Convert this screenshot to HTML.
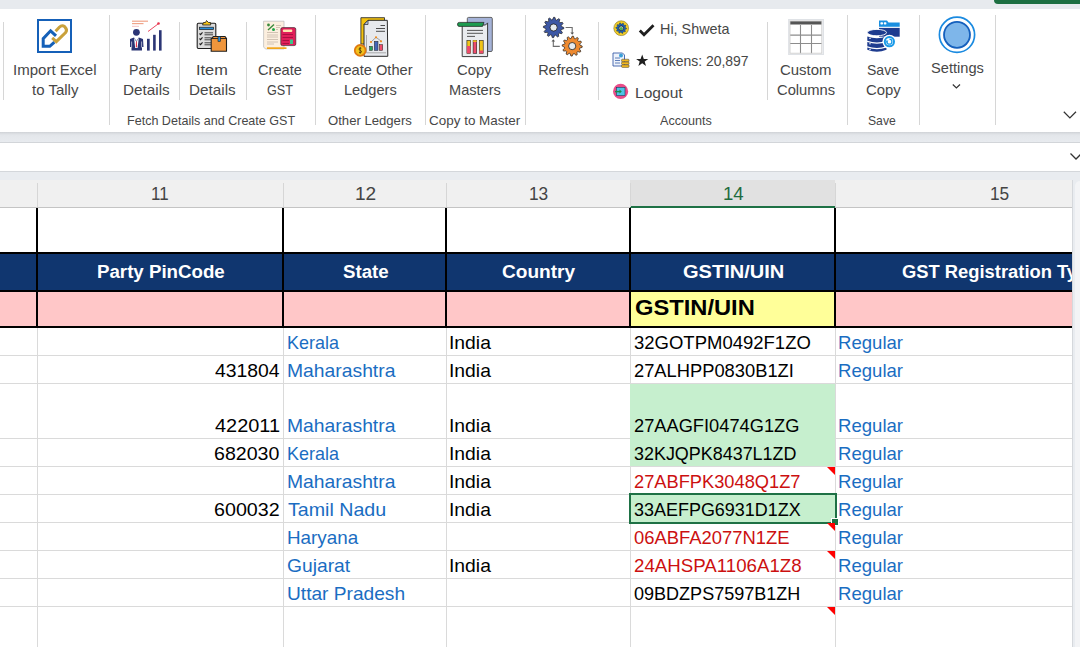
<!DOCTYPE html>
<html><head><meta charset="utf-8"><style>
html,body{margin:0;padding:0;}
body{width:1080px;height:647px;overflow:hidden;position:relative;background:#e9ecf0;font-family:"Liberation Sans",sans-serif;}
.r{position:absolute;}
.t{position:absolute;white-space:nowrap;}
</style></head><body>
<div class="r" style="left:0px;top:0px;width:1080px;height:9px;background:#e7eaee;"></div>
<div class="r" style="left:994px;top:0px;width:86px;height:4px;background:#1d6f42;border-bottom-left-radius:4px;"></div>
<div class="r" style="left:0px;top:9px;width:1080px;height:123px;background:#ffffff;"></div>
<div class="r" style="left:0px;top:132px;width:1080px;height:10px;background:linear-gradient(#cfd2d6 0px,#dadde1 1.5px,#e3e6ea 3px,#e8ebef 10px);"></div>
<div class="r" style="left:0px;top:142px;width:1080px;height:1px;background:#d2d5d9;"></div>
<div class="r" style="left:0px;top:143px;width:1080px;height:28px;background:#ffffff;"></div>
<div class="r" style="left:0px;top:171px;width:1080px;height:1px;background:#d4d7db;"></div>
<div class="r" style="left:0px;top:172px;width:1080px;height:8px;background:#e9ecf0;"></div>
<div class="r" style="left:3px;top:22px;width:1px;height:78px;background:#d6d6d6;"></div>
<div class="r" style="left:179px;top:22px;width:1px;height:78px;background:#d6d6d6;"></div>
<div class="r" style="left:246px;top:22px;width:1px;height:78px;background:#d6d6d6;"></div>
<div class="r" style="left:598px;top:22px;width:1px;height:78px;background:#d6d6d6;"></div>
<div class="r" style="left:767px;top:22px;width:1px;height:78px;background:#d6d6d6;"></div>
<div class="r" style="left:109px;top:15px;width:1px;height:110px;background:#d6d6d6;"></div>
<div class="r" style="left:315px;top:15px;width:1px;height:110px;background:#d6d6d6;"></div>
<div class="r" style="left:425px;top:15px;width:1px;height:110px;background:#d6d6d6;"></div>
<div class="r" style="left:525px;top:15px;width:1px;height:110px;background:#d6d6d6;"></div>
<div class="r" style="left:847px;top:15px;width:1px;height:110px;background:#d6d6d6;"></div>
<div class="r" style="left:919px;top:15px;width:1px;height:110px;background:#d6d6d6;"></div>
<div class="r" style="left:995px;top:15px;width:1px;height:110px;background:#d6d6d6;"></div>
<div class="t" style="left:13.45px;top:62.73px;font-size:14.5px;line-height:14.5px;color:#474747;font-weight:400;transform:scaleX(1.0370);transform-origin:0 50%;">Import Excel</div>
<div class="t" style="left:32.27px;top:82.73px;font-size:14.5px;line-height:14.5px;color:#474747;font-weight:400;transform:scaleX(1.0356);transform-origin:0 50%;">to Tally</div>
<div class="t" style="left:128.87px;top:62.73px;font-size:14.5px;line-height:14.5px;color:#474747;font-weight:400;transform:scaleX(0.9726);transform-origin:0 50%;">Party</div>
<div class="t" style="left:122.58px;top:82.73px;font-size:14.5px;line-height:14.5px;color:#474747;font-weight:400;transform:scaleX(1.0532);transform-origin:0 50%;">Details</div>
<div class="t" style="left:196.43px;top:62.73px;font-size:14.5px;line-height:14.5px;color:#474747;font-weight:400;transform:scaleX(1.1250);transform-origin:0 50%;">Item</div>
<div class="t" style="left:189.38px;top:82.73px;font-size:14.5px;line-height:14.5px;color:#474747;font-weight:400;transform:scaleX(1.0532);transform-origin:0 50%;">Details</div>
<div class="t" style="left:257.67px;top:62.73px;font-size:14.5px;line-height:14.5px;color:#474747;font-weight:400;transform:scaleX(1.0066);transform-origin:0 50%;">Create</div>
<div class="t" style="left:266.77px;top:82.73px;font-size:14.5px;line-height:14.5px;color:#474747;font-weight:400;transform:scaleX(0.8721);transform-origin:0 50%;">GST</div>
<div class="t" style="left:328.47px;top:62.73px;font-size:14.5px;line-height:14.5px;color:#474747;font-weight:400;transform:scaleX(1.0085);transform-origin:0 50%;">Create Other</div>
<div class="t" style="left:344.33px;top:82.73px;font-size:14.5px;line-height:14.5px;color:#474747;font-weight:400;transform:scaleX(1.0069);transform-origin:0 50%;">Ledgers</div>
<div class="t" style="left:457.46px;top:62.73px;font-size:14.5px;line-height:14.5px;color:#474747;font-weight:400;transform:scaleX(1.0201);transform-origin:0 50%;">Copy</div>
<div class="t" style="left:449.13px;top:82.73px;font-size:14.5px;line-height:14.5px;color:#474747;font-weight:400;transform:scaleX(1.0044);transform-origin:0 50%;">Masters</div>
<div class="t" style="left:538.14px;top:62.73px;font-size:14.5px;line-height:14.5px;color:#474747;font-weight:400;">Refresh</div>
<div class="t" style="left:779.95px;top:62.73px;font-size:14.5px;line-height:14.5px;color:#474747;font-weight:400;transform:scaleX(1.0314);transform-origin:0 50%;">Custom</div>
<div class="t" style="left:777.06px;top:82.73px;font-size:14.5px;line-height:14.5px;color:#474747;font-weight:400;transform:scaleX(1.0166);transform-origin:0 50%;">Columns</div>
<div class="t" style="left:867.37px;top:62.73px;font-size:14.5px;line-height:14.5px;color:#474747;font-weight:400;transform:scaleX(0.9668);transform-origin:0 50%;">Save</div>
<div class="t" style="left:865.96px;top:82.73px;font-size:14.5px;line-height:14.5px;color:#474747;font-weight:400;transform:scaleX(1.0262);transform-origin:0 50%;">Copy</div>
<div class="t" style="left:930.84px;top:60.73px;font-size:14.5px;line-height:14.5px;color:#474747;font-weight:400;transform:scaleX(1.0086);transform-origin:0 50%;">Settings</div>
<div class="t" style="left:127.40px;top:115.25px;font-size:12.7px;line-height:12.7px;color:#474747;font-weight:400;transform:scaleX(0.9891);transform-origin:0 50%;">Fetch Details and Create GST</div>
<div class="t" style="left:328.21px;top:115.25px;font-size:12.7px;line-height:12.7px;color:#474747;font-weight:400;transform:scaleX(1.0337);transform-origin:0 50%;">Other Ledgers</div>
<div class="t" style="left:428.73px;top:115.25px;font-size:12.7px;line-height:12.7px;color:#474747;font-weight:400;transform:scaleX(1.0608);transform-origin:0 50%;">Copy to Master</div>
<div class="t" style="left:660.00px;top:115.25px;font-size:12.7px;line-height:12.7px;color:#474747;font-weight:400;transform:scaleX(0.9920);transform-origin:0 50%;">Accounts</div>
<div class="t" style="left:868.45px;top:115.25px;font-size:12.7px;line-height:12.7px;color:#474747;font-weight:400;transform:scaleX(0.9600);transform-origin:0 50%;">Save</div>
<div class="t" style="left:660.45px;top:22.18px;font-size:14.2px;line-height:14.2px;color:#474747;font-weight:400;transform:scaleX(1.0130);transform-origin:0 50%;">Hi, Shweta</div>
<div class="t" style="left:653.62px;top:53.78px;font-size:14.2px;line-height:14.2px;color:#474747;font-weight:400;transform:scaleX(0.9834);transform-origin:0 50%;">Tokens: 20,897</div>
<div class="t" style="left:635.35px;top:85.98px;font-size:14.2px;line-height:14.2px;color:#474747;font-weight:400;transform:scaleX(1.0978);transform-origin:0 50%;">Logout</div>
<svg class="r" style="left:37px;top:19px" width="36" height="34" viewBox="0 0 36 34"><rect x="1" y="1" width="33" height="32" fill="none" stroke="#1560b8" stroke-width="2"/>
<path d="M19 16.8 L13.6 11.8 L6.2 19.6 L6.2 27.3 L12.8 27.3 L17.4 23.2" fill="none" stroke="#1560b8" stroke-width="3" stroke-linejoin="miter"/>
<path d="M15.2 18.8 L19.3 22.6 L28.6 13.6 Q30.8 10.6 27.8 7.8 Q25 5.6 22.3 8.3 L18.6 12.2" fill="none" stroke="#c9a13b" stroke-width="3"/></svg>
<svg class="r" style="left:125px;top:15px" width="42" height="40" viewBox="0 0 42 40"><rect x="7" y="5.6" width="16" height="1.2" fill="#f0a58a"/><rect x="7" y="8" width="11.5" height="1.2" fill="#f0a58a"/><rect x="7" y="10.8" width="7" height="1" fill="#f6c0c0"/>
<path d="M23 16.5 L33 9" stroke="#e8344e" stroke-width="0.9"/><circle cx="33.5" cy="8.5" r="1.3" fill="#e8344e"/>
<circle cx="11.4" cy="17.3" r="3.4" fill="#2b3575"/>
<path d="M5 24 L9 22.5 L11.4 26 L13.8 22.5 L18 24 L18.5 32 L17 32 L17 35.6 L6.5 35.6 L6.5 32 L5 32 Z" fill="#2b3575"/>
<path d="M6.6 26.5 V32.5 M16.6 26.5 V32.5" stroke="#ffffff" stroke-width="0.6"/>
<path d="M9 22.8 L11.4 27 L13.8 22.8 L12.6 33 L10.2 33 Z" fill="#ffffff"/><path d="M11 26.5 L11.9 26.5 L12.1 31.5 L11.4 32.8 L10.8 31.5 Z" fill="#e8344e"/>
<rect x="22" y="23.8" width="2.7" height="11.8" fill="#2b3575"/><rect x="28.1" y="19.8" width="2.6" height="15.8" fill="#2b3575"/><rect x="34" y="15.2" width="2.6" height="20.4" fill="#2b3575"/></svg>
<svg class="r" style="left:192px;top:15px" width="40" height="40" viewBox="0 0 40 40"><rect x="5.2" y="8.3" width="18.6" height="25.2" rx="1.2" fill="#dcdcdc" stroke="#1f1f1f" stroke-width="1.1"/>
<path d="M10.5 10 L11.5 7.5 L13.5 7.5 L14.5 5.5 L16.5 7.5 L18.5 7.5 L18.7 10 Z" fill="#f2c21b" stroke="#1f1f1f" stroke-width="0.8"/>
<rect x="7.4" y="12.2" width="14.2" height="2.4" fill="#2a8fd8" stroke="#1f1f1f" stroke-width="0.7"/>
<path d="M7.5 18.5 L8.6 19.6 L10.5 17.4 M7.5 23.5 L8.6 24.6 L10.5 22.4 M7.5 28.5 L8.6 29.6 L10.5 27.4" fill="none" stroke="#1f1f1f" stroke-width="1.1"/>
<path d="M12.5 17.8 H21 M12.5 19.8 H21 M12.5 22.8 H19 M12.5 24.8 H19 M12.5 27.8 H19 M12.5 29.8 H19" stroke="#333" stroke-width="0.9"/>
<path d="M19.2 23.5 L21.5 21.5 L33 21.5 L34.5 23.5 L34.5 36.2 L19.2 36.2 Z" fill="#f0963c" stroke="#1f1f1f" stroke-width="1.1"/>
<path d="M19.2 23.5 L34.5 23.5" stroke="#1f1f1f" stroke-width="0.9"/><rect x="26" y="21.5" width="2.4" height="5" fill="#2a8fd8" stroke="#1f1f1f" stroke-width="0.6"/></svg>
<svg class="r" style="left:258px;top:15px" width="44" height="40" viewBox="0 0 44 40"><path d="M5.6 6.2 L26 6.2 L26 34 L7.5 34 L5.6 32 Z" fill="#fcefdf" stroke="#b8b8b8" stroke-width="0.7"/>
<path d="M10 15 L16 9.5" stroke="#3a8a3a" stroke-width="1.4"/><circle cx="10.5" cy="10" r="1.4" fill="#3a8a3a"/><circle cx="15.5" cy="14.5" r="1.5" fill="#1ea84a"/>
<path d="M18 10.5 H23 M18 12.5 H22 M18 14.5 H20 M9 17.5 H20 M9 20 H20 M9 22 H20 M9 24.5 H20 M9 27 H20 M9 29 H16" stroke="#c7b7a7" stroke-width="0.8"/>
<rect x="9" y="32.3" width="19.5" height="1.7" fill="#f2a51a"/>
<rect x="22.8" y="12.6" width="15" height="18" rx="1.6" fill="#e11f5a" stroke="#222" stroke-width="0.6"/>
<rect x="24.8" y="14.6" width="9.5" height="2.4" rx="1" fill="#fde7b0"/>
<path d="M24.5 19.5 H35 M24.5 22.5 H35 M24.5 25.5 H31 M24.5 28.5 H31" stroke="#a50f3e" stroke-width="0.9"/><rect x="32" y="24.5" width="3" height="4.5" fill="#3cc48a"/></svg>
<svg class="r" style="left:350px;top:13px" width="42" height="47" viewBox="0 0 42 47"><path d="M10.9 4.7 L34.5 4.7 L34.5 31 L10.9 31 Z" fill="#f4c20d" stroke="#333" stroke-width="0.9"/>
<path d="M18 7.3 L37.3 7.3 L37.8 43.3 L14 43.3 L14 11.5 Z" fill="#e7e9ed" stroke="#2a2a2a" stroke-width="1"/>
<path d="M14 11.5 L18 7.3 L18 11.5 Z" fill="#b4c2e4" stroke="#2a2a2a" stroke-width="0.7"/>
<path d="M30.5 12.5 H35 M26 15.5 H35 M26 18.3 H35" stroke="#3a3a3a" stroke-width="0.9"/>
<path d="M16.5 22 V39.8 H36" stroke="#999" stroke-width="0.8" fill="none"/>
<rect x="19.6" y="33.4" width="2.9" height="4" fill="#25a55a" stroke="#222" stroke-width="0.5"/><rect x="24.3" y="28.3" width="3.7" height="9.1" fill="#4466b8" stroke="#222" stroke-width="0.5"/><rect x="29.4" y="31.6" width="3.3" height="5.8" fill="#ef4b6b" stroke="#222" stroke-width="0.5"/>
<path d="M21 29 L26 24.3 L31 28" stroke="#555" stroke-width="0.5" fill="none"/><circle cx="21" cy="29" r="1.1" fill="#f08a1a"/><circle cx="26" cy="24.3" r="1.1" fill="#f08a1a"/><circle cx="31" cy="28.3" r="1.1" fill="#f08a1a"/>
<circle cx="10.2" cy="37.4" r="5.4" fill="#f2c21b" stroke="#e07a10" stroke-width="1.8"/><path d="M11.3 35.3 Q9 34.5 9 36 Q9 37.3 10.5 37.5 Q12 38 11.3 39.3 Q10 40 9 39.3 M10.2 34 V40.8" stroke="#3a2a0a" stroke-width="0.7" fill="none"/></svg>
<svg class="r" style="left:452px;top:13px" width="46" height="47" viewBox="0 0 46 47"><rect x="15.3" y="4.4" width="25" height="34.1" rx="1.3" fill="#a5b3d8" stroke="#555" stroke-width="0.9"/>
<path d="M10.2 12 L33.5 12 L35.6 9.9 L35.6 43.6 L10.2 43.6 Z" fill="#e9ebee" stroke="#3a3a3a" stroke-width="1"/>
<path d="M5.5 11.2 Q5.5 9.4 7.3 9.4 L32 9.4 L30.5 13.4 L7 13.4 Q5.5 13.4 5.5 11.2 Z" fill="#1d9b4f" stroke="#1f1f1f" stroke-width="0.7"/>
<path d="M15 17.4 H31 M15 20.3 H31 M15 23.4 H23" stroke="#444" stroke-width="0.9"/>
<rect x="14.9" y="27.3" width="3.6" height="13" fill="#f0c419" stroke="#222" stroke-width="0.6"/><rect x="14.9" y="33" width="3.6" height="7.3" fill="#ee4a6a"/>
<rect x="21.1" y="27.3" width="3.6" height="13" fill="#ee4a6a" stroke="#222" stroke-width="0.6"/><rect x="21.1" y="27.3" width="3.6" height="1.6" fill="#f0c419"/>
<rect x="27.3" y="27.3" width="3.9" height="13" fill="#f0c419" stroke="#222" stroke-width="0.6"/><rect x="27.3" y="37.5" width="3.9" height="2.8" fill="#ee4a6a"/></svg>
<svg class="r" style="left:538px;top:13px" width="50" height="47" viewBox="0 0 50 47"><polygon points="25.80,14.50 25.71,15.83 23.28,16.56 22.95,17.54 24.43,19.60 23.69,20.71 21.23,20.13 20.44,20.81 20.70,23.33 19.50,23.92 17.66,22.18 16.64,22.39 15.60,24.70 14.27,24.61 13.54,22.18 12.56,21.85 10.50,23.33 9.39,22.59 9.97,20.13 9.29,19.34 6.77,19.60 6.18,18.40 7.92,16.56 7.71,15.54 5.40,14.50 5.49,13.17 7.92,12.44 8.25,11.46 6.77,9.40 7.51,8.29 9.97,8.87 10.76,8.19 10.50,5.67 11.70,5.08 13.54,6.82 14.56,6.61 15.60,4.30 16.93,4.39 17.66,6.82 18.64,7.15 20.70,5.67 21.81,6.41 21.23,8.87 21.91,9.66 24.43,9.40 25.02,10.60 23.28,12.44 23.49,13.46" fill="#3c57a5" stroke="#1f1f1f" stroke-width="0.7"/><circle cx="15.6" cy="14.5" r="3.6" fill="#e6ebf0" stroke="#1f1f1f" stroke-width="0.8"/><polygon points="44.20,33.10 44.11,34.41 41.73,35.12 41.41,36.08 42.86,38.10 42.13,39.19 39.72,38.62 38.95,39.29 39.20,41.76 38.03,42.34 36.22,40.63 35.22,40.83 34.20,43.10 32.89,43.01 32.18,40.63 31.22,40.31 29.20,41.76 28.11,41.03 28.68,38.62 28.01,37.85 25.54,38.10 24.96,36.93 26.67,35.12 26.47,34.12 24.20,33.10 24.29,31.79 26.67,31.08 26.99,30.12 25.54,28.10 26.27,27.01 28.68,27.58 29.45,26.91 29.20,24.44 30.37,23.86 32.18,25.57 33.18,25.37 34.20,23.10 35.51,23.19 36.22,25.57 37.18,25.89 39.20,24.44 40.29,25.17 39.72,27.58 40.39,28.35 42.86,28.10 43.44,29.27 41.73,31.08 41.93,32.08" fill="#ee8a30" stroke="#1f1f1f" stroke-width="0.7"/><circle cx="34.2" cy="33.1" r="3.6" fill="#e6ebf0" stroke="#1f1f1f" stroke-width="0.8"/><path d="M27.6 14.5 H34.2 V20" stroke="#6e6e6e" stroke-width="1.1" fill="none"/><path d="M32.4 19.6 L34.2 21.8 L36 19.6 Z" fill="#555"/>
<path d="M21.8 33.4 H15.3 V28" stroke="#6e6e6e" stroke-width="1.1" fill="none"/><path d="M13.5 28.4 L15.3 26.2 L17.1 28.4 Z" fill="#555"/></svg>
<svg class="r" style="left:612px;top:20px" width="18" height="17" viewBox="0 0 18 17"><circle cx="9.2" cy="8.2" r="7.4" fill="#f4cf2a" stroke="#6b5a10" stroke-width="0.5"/><polygon points="14.60,8.20 14.53,9.04 13.21,9.50 12.95,10.11 13.57,11.37 13.02,12.02 11.68,11.61 11.11,11.95 10.87,13.34 10.04,13.53 9.20,12.41 8.54,12.36 7.53,13.34 6.75,13.01 6.72,11.61 6.22,11.18 4.83,11.37 4.39,10.65 5.19,9.50 5.04,8.86 3.80,8.20 3.87,7.36 5.19,6.90 5.45,6.29 4.83,5.03 5.38,4.38 6.72,4.79 7.29,4.45 7.53,3.06 8.36,2.87 9.20,3.99 9.86,4.04 10.87,3.06 11.65,3.39 11.68,4.79 12.18,5.22 13.57,5.03 14.01,5.75 13.21,6.90 13.36,7.54" fill="#1d5fb0" stroke="#1f1f1f" stroke-width="0.3"/><circle cx="9.2" cy="8.2" r="2.3" fill="#e6ebf0" stroke="#1f1f1f" stroke-width="0.8"/><circle cx="9.2" cy="8.6" r="1.6" fill="#4caf50"/></svg>
<svg class="r" style="left:638px;top:23px" width="17" height="14" viewBox="0 0 17 14"><path d="M1.8 7.5 L6 11.8 L15.5 2.3" fill="none" stroke="#1f1f1f" stroke-width="2.8"/></svg>
<svg class="r" style="left:612px;top:51px" width="18" height="18" viewBox="0 0 18 18"><path d="M1 2 H10.5 L12.5 4 V15 H1 Z" fill="#eef3fb" stroke="#3b5fa8" stroke-width="0.9"/><path d="M3 7 H8 M3 9.5 H8 M3 12 H8" stroke="#3b5fa8" stroke-width="0.8"/><circle cx="9" cy="4.5" r="2" fill="#3aa0d8"/>
<rect x="9.5" y="8.2" width="7.6" height="2.6" rx="1" fill="#f2b820" stroke="#3a3a3a" stroke-width="0.5"/><rect x="9.5" y="11" width="7.6" height="2.6" rx="1" fill="#f2b820" stroke="#3a3a3a" stroke-width="0.5"/><rect x="9.5" y="13.8" width="7.6" height="2.6" rx="1" fill="#f2b820" stroke="#3a3a3a" stroke-width="0.5"/></svg>
<svg class="r" style="left:636px;top:54px" width="13" height="13" viewBox="0 0 13 13"><path d="M6.2 0.6 L7.8 4.9 L12.3 4.9 L8.7 7.6 L10 12 L6.2 9.3 L2.4 12 L3.7 7.6 L0.1 4.9 L4.6 4.9 Z" fill="#1f1f1f"/></svg>
<svg class="r" style="left:612px;top:83px" width="18" height="17" viewBox="0 0 18 17"><circle cx="8.6" cy="8.4" r="7.6" fill="#ea4c89"/><rect x="4.5" y="4.3" width="8.5" height="8.3" fill="#4cc3e6" stroke="#1f3b5a" stroke-width="0.6"/><path d="M3 8.6 H8.5" stroke="#1a8a4a" stroke-width="1.4"/><path d="M7.5 6.6 L9.8 8.6 L7.5 10.6 Z" fill="#1a8a4a"/></svg>
<svg class="r" style="left:788px;top:19px" width="36" height="36" viewBox="0 0 36 36"><rect x="0.8" y="0.6" width="34.5" height="35" fill="#ffffff" stroke="#dfe2e6" stroke-width="1.4"/>
<rect x="2" y="2.1" width="31.8" height="3.4" fill="#555555"/>
<path d="M12.5 6 V34.2 M23.5 6 V34.2" stroke="#8c8c8c" stroke-width="1.1"/><path d="M2 16.1 H33.8 M2 24.5 H33.8" stroke="#8c8c8c" stroke-width="1.1"/>
<rect x="2" y="2" width="31.8" height="32.2" fill="none" stroke="#c8c8c8" stroke-width="0.8"/></svg>
<svg class="r" style="left:862px;top:14px" width="44" height="46" viewBox="0 0 44 46"><path d="M17 6.4 H25 L26.5 8.4 H37.7 V12.8 H17 Z" fill="#1a8fe0"/><rect x="18.4" y="8.2" width="2.6" height="2.2" rx="0.7" fill="#fff"/><rect x="21.8" y="8.2" width="2.6" height="2.2" rx="0.7" fill="#fff"/>
<rect x="17" y="13.9" width="20.7" height="8.8" fill="#1e3c8f"/>
<ellipse cx="14.9" cy="18.6" rx="9.6" ry="3.2" fill="#1e3c8f" stroke="#fff" stroke-width="0.9"/>
<path d="M5.3 22.5 Q14.9 26 24.5 22.5 V26.8 Q14.9 30.3 5.3 26.8 Z" fill="#1e3c8f"/>
<path d="M5.3 28 Q14.9 31.5 24.5 28 V32.3 Q14.9 35.8 5.3 32.3 Z" fill="#1e3c8f"/>
<path d="M5.3 33.5 Q14.9 37 24.5 33.5 V35.8 Q14.9 39.8 5.3 35.8 Z" fill="#1e3c8f"/>
<path d="M7 24.3 H9 M7 29.8 H9 M7 35.3 H9" stroke="#fff" stroke-width="0.8"/>
<circle cx="27.4" cy="27.7" r="7" fill="#ffffff"/><circle cx="27.4" cy="27.7" r="5.6" fill="#1a9ae8"/><circle cx="27.4" cy="27.7" r="3.6" fill="#ffffff"/>
<path d="M27.4 25.2 A2.5 2.5 0 1 1 24.9 27.7" fill="none" stroke="#1a9ae8" stroke-width="1.3"/><path d="M23.4 26.6 L25 29 L26.4 26.6 Z" fill="#1a9ae8"/></svg>
<svg class="r" style="left:937px;top:15px" width="40" height="40" viewBox="0 0 40 40"><circle cx="20" cy="19.8" r="17.6" fill="#ffffff" stroke="#1a8ae0" stroke-width="1.7"/><circle cx="20" cy="19.8" r="13" fill="#7eb6ea" stroke="#1560bd" stroke-width="1.8"/></svg>
<svg class="r" style="left:950px;top:82px" width="12" height="8" viewBox="0 0 12 8"><path d="M2.8 2.5 L6.4 6 L10 2.5" fill="none" stroke="#333" stroke-width="1.2"/></svg>
<svg class="r" style="left:1060px;top:108px" width="18" height="12" viewBox="0 0 18 12"><path d="M3.8 3.8 L9.9 9.9 L16 3.8" fill="none" stroke="#333" stroke-width="1.25"/></svg>
<svg class="r" style="left:1067px;top:150px" width="14" height="12" viewBox="0 0 14 12"><path d="M3.5 3.5 L9 9 L14.5 3.5" fill="none" stroke="#333" stroke-width="1.25"/></svg>
<div class="r" style="left:0px;top:180px;width:1072px;height:467px;background:#ffffff;"></div>
<div class="r" style="left:0px;top:180px;width:1072px;height:27px;background:#f0f0f0;"></div>
<div class="r" style="left:630px;top:180px;width:205px;height:27px;background:#e1e1e1;"></div>
<div class="r" style="left:0px;top:207px;width:1072px;height:1px;background:#c4c4c4;"></div>
<div class="r" style="left:630px;top:206px;width:205px;height:2px;background:#1e7145;"></div>
<div class="r" style="left:37px;top:183px;width:1px;height:24px;background:#d6d6d6;"></div>
<div class="r" style="left:283px;top:183px;width:1px;height:24px;background:#d6d6d6;"></div>
<div class="r" style="left:446px;top:183px;width:1px;height:24px;background:#d6d6d6;"></div>
<div class="r" style="left:630px;top:183px;width:1px;height:24px;background:#d6d6d6;"></div>
<div class="r" style="left:835px;top:183px;width:1px;height:24px;background:#d6d6d6;"></div>
<div class="t" style="left:151.23px;top:186.19px;font-size:17.5px;line-height:17.5px;color:#444444;font-weight:400;transform:scaleX(0.9680);transform-origin:0 50%;">11</div>
<div class="t" style="left:354.57px;top:186.19px;font-size:17.5px;line-height:17.5px;color:#444444;font-weight:400;transform:scaleX(1.0906);transform-origin:0 50%;">12</div>
<div class="t" style="left:529.30px;top:186.19px;font-size:17.5px;line-height:17.5px;color:#444444;font-weight:400;transform:scaleX(0.9878);transform-origin:0 50%;">13</div>
<div class="t" style="left:722.60px;top:186.19px;font-size:17.5px;line-height:17.5px;color:#1e6b3e;font-weight:400;transform:scaleX(1.0633);transform-origin:0 50%;">14</div>
<div class="t" style="left:990.40px;top:186.19px;font-size:17.5px;line-height:17.5px;color:#444444;font-weight:400;transform:scaleX(0.9878);transform-origin:0 50%;">15</div>
<div class="r" style="left:0px;top:355px;width:1072px;height:1px;background:#dadada;"></div>
<div class="r" style="left:0px;top:383px;width:1072px;height:1px;background:#dadada;"></div>
<div class="r" style="left:0px;top:438px;width:1072px;height:1px;background:#dadada;"></div>
<div class="r" style="left:0px;top:466px;width:1072px;height:1px;background:#dadada;"></div>
<div class="r" style="left:0px;top:494px;width:1072px;height:1px;background:#dadada;"></div>
<div class="r" style="left:0px;top:522px;width:1072px;height:1px;background:#dadada;"></div>
<div class="r" style="left:0px;top:550px;width:1072px;height:1px;background:#dadada;"></div>
<div class="r" style="left:0px;top:578px;width:1072px;height:1px;background:#dadada;"></div>
<div class="r" style="left:0px;top:606px;width:1072px;height:1px;background:#dadada;"></div>
<div class="r" style="left:37px;top:328px;width:1px;height:319px;background:#dadada;"></div>
<div class="r" style="left:283px;top:328px;width:1px;height:319px;background:#dadada;"></div>
<div class="r" style="left:446px;top:328px;width:1px;height:319px;background:#dadada;"></div>
<div class="r" style="left:630px;top:328px;width:1px;height:319px;background:#dadada;"></div>
<div class="r" style="left:835px;top:328px;width:1px;height:319px;background:#dadada;"></div>
<div class="r" style="left:0px;top:254px;width:1072px;height:36px;background:#10366f;"></div>
<div class="r" style="left:0px;top:292px;width:1072px;height:34px;background:#ffc7c8;"></div>
<div class="r" style="left:630px;top:292px;width:205px;height:34px;background:#ffff99;"></div>
<div class="r" style="left:0px;top:252px;width:1072px;height:2px;background:#000;"></div>
<div class="r" style="left:0px;top:290px;width:1072px;height:2px;background:#000;"></div>
<div class="r" style="left:0px;top:326px;width:1072px;height:2px;background:#000;"></div>
<div class="r" style="left:36px;top:208px;width:2px;height:120px;background:#000;"></div>
<div class="r" style="left:282px;top:208px;width:2px;height:120px;background:#000;"></div>
<div class="r" style="left:445px;top:208px;width:2px;height:120px;background:#000;"></div>
<div class="r" style="left:629px;top:208px;width:2px;height:120px;background:#000;"></div>
<div class="r" style="left:834px;top:208px;width:2px;height:120px;background:#000;"></div>
<div class="t" style="left:96.58px;top:263.79px;font-size:17.5px;line-height:17.5px;color:#ffffff;font-weight:700;transform:scaleX(1.0682);transform-origin:0 50%;">Party PinCode</div>
<div class="t" style="left:343.04px;top:263.79px;font-size:17.5px;line-height:17.5px;color:#ffffff;font-weight:700;transform:scaleX(1.0660);transform-origin:0 50%;">State</div>
<div class="t" style="left:502.04px;top:263.79px;font-size:17.5px;line-height:17.5px;color:#ffffff;font-weight:700;transform:scaleX(1.0900);transform-origin:0 50%;">Country</div>
<div class="t" style="left:682.90px;top:263.79px;font-size:17.5px;line-height:17.5px;color:#ffffff;font-weight:700;transform:scaleX(1.1452);transform-origin:0 50%;">GSTIN/UIN</div>
<div class="t" style="left:901.97px;top:263.79px;font-size:17.5px;line-height:17.5px;color:#ffffff;font-weight:700;transform:scaleX(1.0489);transform-origin:0 50%;">GST Registration Ty</div>
<div class="t" style="left:634.65px;top:298.20px;font-size:21.5px;line-height:21.5px;color:#000;font-weight:700;transform:scaleX(1.1022);transform-origin:0 50%;">GSTIN/UIN</div>
<div class="r" style="left:630px;top:384px;width:205px;height:82px;background:#c6efce;"></div>
<div class="r" style="left:630px;top:495px;width:205px;height:27px;background:#c6efce;"></div>
<div class="r" style="left:629px;top:493px;width:208px;height:31px;background:transparent;box-sizing:border-box;border:2px solid #1e7145;"></div>
<div class="r" style="left:832px;top:519px;width:6px;height:6px;background:#1e7145;outline:1px solid #fff;"></div>
<div class="t" style="left:286.86px;top:334.93px;font-size:17.8px;line-height:17.8px;color:#1a6dc2;font-weight:400;transform:scaleX(1.0096);transform-origin:0 50%;">Kerala</div>
<div class="t" style="left:448.96px;top:334.93px;font-size:17.8px;line-height:17.8px;color:#000;font-weight:400;transform:scaleX(1.0857);transform-origin:0 50%;">India</div>
<div class="t" style="left:633.86px;top:334.93px;font-size:17.8px;line-height:17.8px;color:#000;font-weight:400;transform:scaleX(1.0405);transform-origin:0 50%;">32GOTPM0492F1ZO</div>
<div class="t" style="left:838.21px;top:334.93px;font-size:17.8px;line-height:17.8px;color:#1a6dc2;font-weight:400;transform:scaleX(1.0444);transform-origin:0 50%;">Regular</div>
<div class="t" style="left:214.61px;top:362.93px;font-size:17.8px;line-height:17.8px;color:#000;font-weight:400;transform:scaleX(1.0894);transform-origin:0 50%;">431804</div>
<div class="t" style="left:286.75px;top:362.93px;font-size:17.8px;line-height:17.8px;color:#1a6dc2;font-weight:400;transform:scaleX(1.0860);transform-origin:0 50%;">Maharashtra</div>
<div class="t" style="left:448.96px;top:362.93px;font-size:17.8px;line-height:17.8px;color:#000;font-weight:400;transform:scaleX(1.0857);transform-origin:0 50%;">India</div>
<div class="t" style="left:633.68px;top:362.93px;font-size:17.8px;line-height:17.8px;color:#000;font-weight:400;transform:scaleX(1.0300);transform-origin:0 50%;">27ALHPP0830B1ZI</div>
<div class="t" style="left:838.21px;top:362.93px;font-size:17.8px;line-height:17.8px;color:#1a6dc2;font-weight:400;transform:scaleX(1.0444);transform-origin:0 50%;">Regular</div>
<div class="t" style="left:214.60px;top:417.93px;font-size:17.8px;line-height:17.8px;color:#000;font-weight:400;transform:scaleX(1.1201);transform-origin:0 50%;">422011</div>
<div class="t" style="left:286.75px;top:417.93px;font-size:17.8px;line-height:17.8px;color:#1a6dc2;font-weight:400;transform:scaleX(1.0860);transform-origin:0 50%;">Maharashtra</div>
<div class="t" style="left:448.96px;top:417.93px;font-size:17.8px;line-height:17.8px;color:#000;font-weight:400;transform:scaleX(1.0857);transform-origin:0 50%;">India</div>
<div class="t" style="left:633.69px;top:417.93px;font-size:17.8px;line-height:17.8px;color:#000;font-weight:400;transform:scaleX(1.0268);transform-origin:0 50%;">27AAGFI0474G1ZG</div>
<div class="t" style="left:838.21px;top:417.93px;font-size:17.8px;line-height:17.8px;color:#1a6dc2;font-weight:400;transform:scaleX(1.0444);transform-origin:0 50%;">Regular</div>
<div class="t" style="left:214.02px;top:445.93px;font-size:17.8px;line-height:17.8px;color:#000;font-weight:400;transform:scaleX(1.1011);transform-origin:0 50%;">682030</div>
<div class="t" style="left:286.86px;top:445.93px;font-size:17.8px;line-height:17.8px;color:#1a6dc2;font-weight:400;transform:scaleX(1.0096);transform-origin:0 50%;">Kerala</div>
<div class="t" style="left:448.96px;top:445.93px;font-size:17.8px;line-height:17.8px;color:#000;font-weight:400;transform:scaleX(1.0857);transform-origin:0 50%;">India</div>
<div class="t" style="left:633.88px;top:445.93px;font-size:17.8px;line-height:17.8px;color:#000;font-weight:400;transform:scaleX(1.0084);transform-origin:0 50%;">32KJQPK8437L1ZD</div>
<div class="t" style="left:838.21px;top:445.93px;font-size:17.8px;line-height:17.8px;color:#1a6dc2;font-weight:400;transform:scaleX(1.0444);transform-origin:0 50%;">Regular</div>
<div class="t" style="left:286.75px;top:473.93px;font-size:17.8px;line-height:17.8px;color:#1a6dc2;font-weight:400;transform:scaleX(1.0860);transform-origin:0 50%;">Maharashtra</div>
<div class="t" style="left:448.96px;top:473.93px;font-size:17.8px;line-height:17.8px;color:#000;font-weight:400;transform:scaleX(1.0857);transform-origin:0 50%;">India</div>
<div class="t" style="left:633.69px;top:473.93px;font-size:17.8px;line-height:17.8px;color:#cc1010;font-weight:400;transform:scaleX(1.0270);transform-origin:0 50%;">27ABFPK3048Q1Z7</div>
<div class="t" style="left:838.21px;top:473.93px;font-size:17.8px;line-height:17.8px;color:#1a6dc2;font-weight:400;transform:scaleX(1.0444);transform-origin:0 50%;">Regular</div>
<div class="t" style="left:214.02px;top:501.93px;font-size:17.8px;line-height:17.8px;color:#000;font-weight:400;transform:scaleX(1.1062);transform-origin:0 50%;">600032</div>
<div class="t" style="left:287.91px;top:501.93px;font-size:17.8px;line-height:17.8px;color:#1a6dc2;font-weight:400;transform:scaleX(1.1042);transform-origin:0 50%;">Tamil Nadu</div>
<div class="t" style="left:448.96px;top:501.93px;font-size:17.8px;line-height:17.8px;color:#000;font-weight:400;transform:scaleX(1.0857);transform-origin:0 50%;">India</div>
<div class="t" style="left:633.88px;top:501.93px;font-size:17.8px;line-height:17.8px;color:#000;font-weight:400;transform:scaleX(1.0103);transform-origin:0 50%;">33AEFPG6931D1ZX</div>
<div class="t" style="left:838.21px;top:501.93px;font-size:17.8px;line-height:17.8px;color:#1a6dc2;font-weight:400;transform:scaleX(1.0444);transform-origin:0 50%;">Regular</div>
<div class="t" style="left:286.79px;top:529.93px;font-size:17.8px;line-height:17.8px;color:#1a6dc2;font-weight:400;transform:scaleX(1.0583);transform-origin:0 50%;">Haryana</div>
<div class="t" style="left:633.86px;top:529.93px;font-size:17.8px;line-height:17.8px;color:#cc1010;font-weight:400;transform:scaleX(1.0357);transform-origin:0 50%;">06ABFA2077N1ZE</div>
<div class="t" style="left:838.21px;top:529.93px;font-size:17.8px;line-height:17.8px;color:#1a6dc2;font-weight:400;transform:scaleX(1.0444);transform-origin:0 50%;">Regular</div>
<div class="t" style="left:287.34px;top:557.93px;font-size:17.8px;line-height:17.8px;color:#1a6dc2;font-weight:400;transform:scaleX(1.0817);transform-origin:0 50%;">Gujarat</div>
<div class="t" style="left:448.96px;top:557.93px;font-size:17.8px;line-height:17.8px;color:#000;font-weight:400;transform:scaleX(1.0857);transform-origin:0 50%;">India</div>
<div class="t" style="left:633.66px;top:557.93px;font-size:17.8px;line-height:17.8px;color:#cc1010;font-weight:400;transform:scaleX(1.0508);transform-origin:0 50%;">24AHSPA1106A1Z8</div>
<div class="t" style="left:838.21px;top:557.93px;font-size:17.8px;line-height:17.8px;color:#1a6dc2;font-weight:400;transform:scaleX(1.0444);transform-origin:0 50%;">Regular</div>
<div class="t" style="left:286.86px;top:585.93px;font-size:17.8px;line-height:17.8px;color:#1a6dc2;font-weight:400;transform:scaleX(1.0761);transform-origin:0 50%;">Uttar Pradesh</div>
<div class="t" style="left:633.88px;top:585.93px;font-size:17.8px;line-height:17.8px;color:#000;font-weight:400;transform:scaleX(1.0138);transform-origin:0 50%;">09BDZPS7597B1ZH</div>
<div class="t" style="left:838.21px;top:585.93px;font-size:17.8px;line-height:17.8px;color:#1a6dc2;font-weight:400;transform:scaleX(1.0444);transform-origin:0 50%;">Regular</div>
<svg class="r" style="left:827px;top:467px" width="8" height="8" viewBox="0 0 8 8"><path d="M0 0 H8 V8 Z" fill="#ff0000"/></svg>
<svg class="r" style="left:827px;top:523px" width="8" height="8" viewBox="0 0 8 8"><path d="M0 0 H8 V8 Z" fill="#ff0000"/></svg>
<svg class="r" style="left:827px;top:551px" width="8" height="8" viewBox="0 0 8 8"><path d="M0 0 H8 V8 Z" fill="#ff0000"/></svg>
<svg class="r" style="left:827px;top:607px" width="8" height="8" viewBox="0 0 8 8"><path d="M0 0 H8 V8 Z" fill="#ff0000"/></svg>
<div class="r" style="left:1072px;top:180px;width:1px;height:467px;background:#d5d8dc;"></div>
<div class="r" style="left:1073px;top:172px;width:7px;height:475px;background:#e9ecf0;"></div>
<div class="r" style="left:1075px;top:181px;width:5px;height:466px;background:#f3f4f6;border-top-left-radius:5px;"></div>
</body></html>
